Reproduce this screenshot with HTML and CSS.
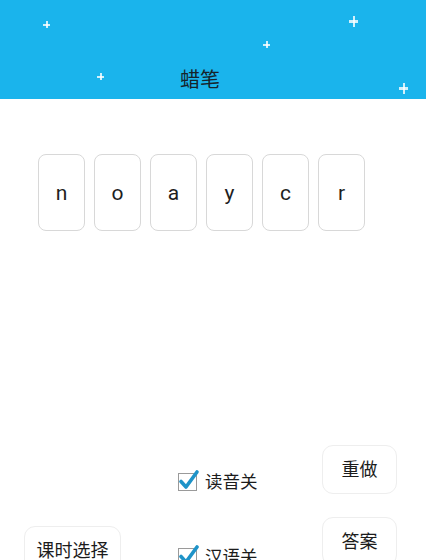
FILE: index.html
```html
<!DOCTYPE html>
<html>
<head>
<meta charset="utf-8">
<link rel="stylesheet" href="styles.css">
</head>
<body>
<header class="header">
  <span class="spark s1"></span>
  <span class="spark s2"></span>
  <span class="spark s3 big"></span>
  <span class="spark s4"></span>
  <span class="spark s5 big"></span>
  <h1 class="title">蜡笔</h1>
</header>
<section class="cards">
  <div class="card">n</div>
  <div class="card">o</div>
  <div class="card">a</div>
  <div class="card">y</div>
  <div class="card">c</div>
  <div class="card">r</div>
</section>
<section class="controls">
  <div class="col-left">
    <button class="btn btn-wide">课时选择</button>
  </div>
  <div class="col-mid">
    <label class="check">
      <svg class="cb" width="24" height="24" viewBox="0 0 24 24"><rect x="2.5" y="5.5" width="18" height="17" fill="#fff" stroke="#9a9a9a"/><path d="M5 13.5 L10 19 L21 4" fill="none" stroke="#1e93c8" stroke-width="3.6" stroke-linecap="round" stroke-linejoin="round"/></svg>
      <span>读音关</span>
    </label>
    <label class="check">
      <svg class="cb" width="24" height="24" viewBox="0 0 24 24"><rect x="2.5" y="5.5" width="18" height="17" fill="#fff" stroke="#9a9a9a"/><path d="M5 13.5 L10 19 L21 4" fill="none" stroke="#1e93c8" stroke-width="3.6" stroke-linecap="round" stroke-linejoin="round"/></svg>
      <span>汉语关</span>
    </label>
  </div>
  <div class="col-right">
    <button class="btn">重做</button>
    <button class="btn">答案</button>
  </div>
</section>
</body>
</html>
```
FILE: styles.css
```css
* { box-sizing: border-box; }
html, body { margin: 0; padding: 0; }
body {
  width: 426px;
  height: 560px;
  overflow: hidden;
  background: #fff;
  font-family: "Noto Sans CJK SC", "Noto Sans", sans-serif;
  color: #1c1c1c;
}
.header {
  position: relative;
  height: 99px;
  background: #1ab4ec;
  display: flex;
  align-items: flex-end;
  padding: 0 0 8px 180px;
}
.title {
  margin: 0;
  font-size: 20px;
  font-weight: 400;
  line-height: 24px;
  color: #16232b;
}
.spark {
  position: absolute;
  width: 7px;
  height: 7px;
}
.spark::before, .spark::after {
  content: "";
  position: absolute;
  background: rgba(255,255,255,0.8);
}
.spark::before { left: 3px; top: 0; width: 1.5px; height: 7px; }
.spark::after { top: 3px; left: 0; width: 7px; height: 1.5px; }
.spark.big { width: 9px; height: 11px; }
.spark.big::before { left: 3.5px; width: 2px; height: 11px; }
.spark.big::after { top: 4px; width: 9px; height: 2.5px; }
.s1 { left: 43px; top: 21px; }
.s2 { left: 263px; top: 41px; }
.s3 { left: 349px; top: 16px; }
.s4 { left: 97px; top: 73px; }
.s5 { left: 399px; top: 83px; }

.cards {
  display: flex;
  gap: 9px;
  padding-left: 38px;
  margin-top: 55px;
}
.card {
  width: 47px;
  height: 77px;
  border: 1.5px solid #d8d8d8;
  border-radius: 8px;
  display: flex;
  align-items: center;
  justify-content: center;
  font-family: Roboto, "Noto Sans", sans-serif;
  font-size: 21px;
  color: #1e1e1e;
}

.controls {
  display: flex;
  margin-top: 214px;
}
.col-left {
  margin-left: 24px;
  padding-top: 81px;
}
.col-mid {
  margin-left: 55px;
  padding-top: 23px;
  display: flex;
  flex-direction: column;
  gap: 51px;
}
.col-right {
  margin-left: auto;
  margin-right: 29px;
  display: flex;
  flex-direction: column;
  gap: 23px;
}
.btn {
  width: 75px;
  height: 49px;
  border: 1.5px solid #eeeeee;
  border-radius: 11px;
  background: #fff;
  font-family: "Noto Sans CJK SC", sans-serif;
  font-size: 18px;
  line-height: 24px;
  color: #1c1c1c;
  padding: 0 0 3px;
}
.btn-wide { width: 97px; }
.check {
  display: flex;
  align-items: center;
  gap: 5px;
  height: 24px;
  font-size: 17.5px;
  color: #1c1c1c;
}
.cb { display: block; }
```
